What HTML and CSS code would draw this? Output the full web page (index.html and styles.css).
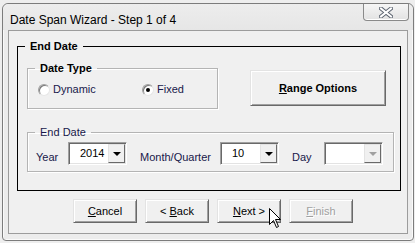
FILE: index.html
```html
<!DOCTYPE html>
<html>

<head>
    <link rel="stylesheet" href="styles.css">
</head>

<body>
    <div class="window">
        <div class="titlebar">
            <span class="title">Date Span Wizard - Step 1 of 4</span>
            <div class="close">
                <svg width="14" height="11" viewBox="0 0 14 11">
                    <path d="M2 1.5 L12 9.5 M12 1.5 L2 9.5" stroke="#5c6470" stroke-width="4" stroke-linecap="square" />
                    <path d="M2 1.5 L12 9.5 M12 1.5 L2 9.5" stroke="#ffffff" stroke-width="2" stroke-linecap="square" />
                </svg>
            </div>
        </div>
        <div class="client">
            <fieldset class="frame">
                <legend>End Date</legend>
                <div class="frame_body">
                    <div class="row_top">
                        <fieldset class="group type">
                            <legend>Date Type</legend>
                            <div class="type_body">
                                <span class="opt dynamic"><span class="radio"></span>Dynamic</span>
                                <span class="opt"><span class="radio on"></span>Fixed</span>
                            </div>
                        </fieldset>
                        <button class="btn big"><u>R</u>ange Options</button>
                    </div>
                    <fieldset class="group dates">
                        <legend>End Date</legend>
                        <div class="dates_body">
                            <span class="lbl year">Year</span>
                            <div class="combo"><span class="val">2014</span><span class="drop"></span></div>
                            <span class="lbl month">Month/Quarter</span>
                            <div class="combo"><span class="val">10</span><span class="drop"></span></div>
                            <span class="lbl day">Day</span>
                            <div class="combo"><span class="val"></span><span class="drop off"></span></div>
                        </div>
                    </fieldset>
                </div>
            </fieldset>
            <div class="buttons">
                <button class="btn"><u>C</u>ancel</button>
                <button class="btn">&lt; <u>B</u>ack</button>
                <button class="btn"><u>N</u>ext &gt;</button>
                <button class="btn disabled"><u>F</u>inish</button>
            </div>
        </div>
    </div>

    <svg class="cursor" width="13" height="21" viewBox="0 0 13 21">
        <path d="M0.5 0.5 L0.5 16.5 L4.5 12.5 L7.5 19.5 L9.5 18.5 L6.5 11.5 L11.5 11.5 Z" fill="#fff" stroke="#000" stroke-width="1" />
    </svg>
</body>

</html>
```

FILE: styles.css
```css
body {
    margin: 0;
    background: #eeeeee;
    font-family: "Liberation Sans", Arial, sans-serif;
    font-size: 11px;
    position: relative;
    height: 243px;
    overflow: hidden;
}

.window {
    margin: 3px 0 0 2px;
    width: 410px;
    height: 236px;
    border: 1px solid #7c7c7c;
    border-radius: 6px 6px 4px 4px;
    background: #ececec;
    box-shadow: inset 1px 1px 0 #fafafa, inset -1px -1px 0 #fafafa;
}

.titlebar {
    height: 26px;
    display: flex;
    justify-content: space-between;
    background: linear-gradient(#ededed, #e6e6e6);
    border-radius: 6px 6px 0 0;
}

.title {
    font-size: 12px;
    line-height: 14px;
    padding: 9px 0 0 7px;
    color: #000;
}

.close {
    width: 44px;
    height: 16px;
    margin-right: 4px;
    border: 1px solid #8a8a8a;
    border-top: none;
    border-radius: 0 0 4px 4px;
    background: linear-gradient(#f6f6f6, #e2e2e2);
    box-shadow: inset 0 -1px 0 #fff;
    display: flex;
    align-items: center;
    justify-content: center;
}

.client {
    margin: 0 5px;
    height: 202px;
    border: 1px solid #9c9c9c;
    background: #f0f0f0;
}

fieldset {
    margin: 0;
    padding: 0;
    min-width: 0;
}

legend {
    margin-left: 7px;
    padding: 0 5px;
    line-height: 13px;
}

.frame {
    margin: 9px 0 0 8px;
    width: 382px;
    border: 1px solid #000;
}

.frame > legend {
    font-weight: bold;
    color: #000;
}

.frame_body {
    padding: 9px 0 0 9px;
    height: 128px;
}

.row_top {
    display: flex;
    align-items: flex-start;
}

.group {
    border: 1px solid #b4b4b4;
    box-shadow: 1px 1px 0 #fff, inset 1px 1px 0 #fff;
}

.type {
    width: 189px;
}

.type > legend {
    font-weight: bold;
    color: #000;
}

.type_body {
    display: flex;
    align-items: center;
    padding: 8px 0 12px 10px;
    color: #18184a;
    line-height: 13px;
}

.opt {
    display: flex;
    align-items: center;
}

.opt.dynamic {
    width: 104px;
}

.radio {
    width: 10px;
    height: 10px;
    margin-right: 3px;
    border-radius: 50%;
    background: #fff;
    border: 1px solid;
    border-color: #a0a0a0 #e6e6e6 #e6e6e6 #a0a0a0;
    box-shadow: inset 1px 1px 0 #7a7a7a;
    display: flex;
    align-items: center;
    justify-content: center;
}

.radio.on::after {
    content: "";
    width: 4px;
    height: 4px;
    border-radius: 50%;
    background: #000;
}

.btn {
    width: 64px;
    height: 24px;
    padding: 0;
    font-family: inherit;
    font-size: 11px;
    color: #000;
    background: #f0f0f0;
    border: 1px solid;
    border-color: #e3e3e3 #696969 #696969 #e3e3e3;
    box-shadow: inset 1px 1px 0 #fff, inset -1px -1px 0 #a0a0a0;
}

.btn.big {
    width: 136px;
    height: 36px;
    margin: 8px 0 0 32px;
    font-weight: bold;
}

.btn.disabled {
    color: #a0a0a0;
    text-shadow: 1px 1px 0 #fff;
}

.dates {
    margin-top: 17px;
    width: 365px;
    color: #18184a;
}

.dates_body {
    display: flex;
    align-items: flex-start;
    padding: 3px 0 6px 8px;
}

.lbl {
    margin-top: 9px;
    line-height: 13px;
}

.lbl.year {
    width: 32px;
}

.lbl.month {
    width: 80px;
    margin-left: 13px;
}

.lbl.day {
    width: 32px;
    margin-left: 13px;
}

.combo {
    width: 57px;
    height: 21px;
    display: flex;
    justify-content: space-between;
    background: #fff;
    border: 1px solid;
    border-color: #a0a0a0 #fff #fff #a0a0a0;
    box-shadow: inset 1px 1px 0 #696969, inset -1px -1px 0 #e3e3e3;
}

.combo .val {
    padding: 0 0 0 11px;
    line-height: 21px;
    color: #000;
}

.combo .drop {
    width: 15px;
    height: 17px;
    margin: 1px 1px 1px 0;
    background: #f0f0f0;
    border: 1px solid;
    border-color: #e3e3e3 #696969 #696969 #e3e3e3;
    display: flex;
    align-items: center;
    justify-content: center;
}

.combo .drop::after {
    content: "";
    border-left: 4px solid transparent;
    border-right: 4px solid transparent;
    border-top: 4px solid #000;
}

.combo .drop.off::after {
    border-top-color: #a0a0a0;
}

.buttons {
    display: flex;
    gap: 8px;
    margin: 8px 0 0 64px;
}

.cursor {
    position: absolute;
    left: 269px;
    top: 208px;
}
```
